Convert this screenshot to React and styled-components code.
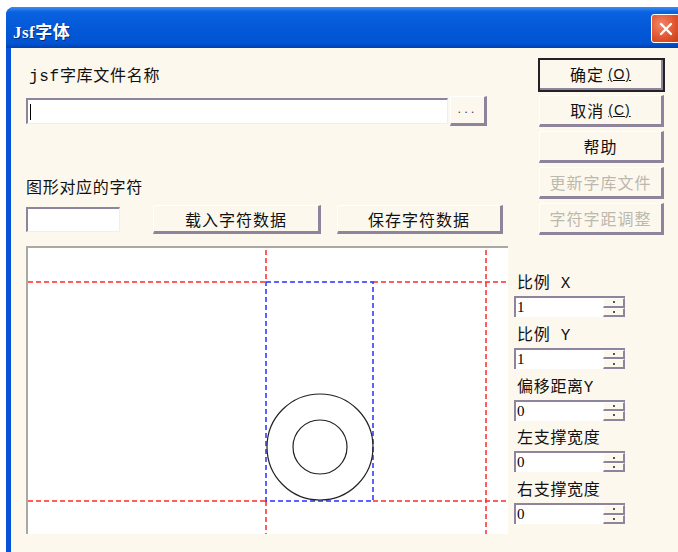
import React from "react";
import styled, { createGlobalStyle } from "styled-components";

const GlobalStyle = createGlobalStyle`
  html, body {
    margin: 0;
    padding: 0;
    background: #ffffff;
    overflow: hidden;
  }
  body {
    font-family: "Noto Sans CJK SC", sans-serif;
  }
`;

const FACE = "#fcf8ee";
const SHADOW = "#8e849b";

const Window = styled.div`
  margin: 7px 0 0 6px;
  width: 680px;
  height: 560px;
  display: flex;
  flex-direction: column;
  background: #0553d6;
  border-radius: 8px 8px 0 0;
`;

const TitleBar = styled.div`
  height: 41px;
  display: flex;
  align-items: center;
  justify-content: space-between;
  padding: 0 6px 0 7px;
  border-radius: 8px 8px 0 0;
  background: linear-gradient(
    to bottom,
    #3d8ff6 0%,
    #0a62e0 12%,
    #0459d8 50%,
    #0054d2 88%,
    #003fb0 100%
  );
`;

const Title = styled.div`
  padding-top: 6px;
  color: #ffffff;
  font-family: "Liberation Serif", "Noto Sans CJK SC", serif;
  font-weight: bold;
  font-size: 17px;
  letter-spacing: 0.5px;
  text-shadow: 1px 1px 0 #0a2a7a;
`;

const CloseButton = styled.div`
  width: 27px;
  height: 27px;
  margin-top: 2px;
  display: flex;
  align-items: center;
  justify-content: center;
  border: 1px solid #ffffff;
  border-radius: 3px;
  background: radial-gradient(circle at 35% 35%, #f0876a 0%, #e0552f 55%, #c23c14 100%);
`;

const Client = styled.div`
  flex: 1;
  margin-left: 5px;
  display: flex;
  background: ${FACE};
`;

const LeftPane = styled.div`
  width: 497px;
  box-sizing: border-box;
  padding: 19px 0 0 15px;
  display: flex;
  flex-direction: column;
`;

const Label = styled.div`
  height: ${(p) => p.$h || 20}px;
  line-height: ${(p) => p.$h || 20}px;
  margin-top: ${(p) => p.$mt || 0}px;
  padding-left: ${(p) => p.$pl || 0}px;
  font-family: "Liberation Mono", "Noto Sans CJK SC", monospace;
  font-size: 16px;
  letter-spacing: 0.7px;
  color: #111111;
  white-space: nowrap;
`;

const Row = styled.div`
  display: flex;
  align-items: center;
  margin-top: ${(p) => p.$mt || 0}px;
  gap: ${(p) => p.$gap || 0}px;
`;

const TextField = styled.div`
  box-sizing: border-box;
  width: ${(p) => p.$w}px;
  height: ${(p) => p.$h}px;
  margin-right: ${(p) => p.$mr || 0}px;
  display: flex;
  align-items: center;
  padding-left: 2px;
  background: #ffffff;
  border-top: 2px solid ${SHADOW};
  border-left: 2px solid ${SHADOW};
  border-bottom: 1px solid #f4efe4;
  border-right: 1px solid #f4efe4;
  font-family: "Liberation Serif", serif;
  font-size: 15px;
  color: #000000;
`;

const Caret = styled.span`
  width: 1px;
  height: 16px;
  background: #000000;
`;

const Button = styled.div`
  box-sizing: border-box;
  width: ${(p) => p.$w}px;
  height: ${(p) => p.$h || 32}px;
  display: flex;
  align-items: center;
  justify-content: center;
  background: ${FACE};
  border-top: 1px solid #ffffff;
  border-left: 1px solid #ffffff;
  border-right: 3px solid ${SHADOW};
  border-bottom: 3px solid ${SHADOW};
  outline: ${(p) => (p.$default ? "2px solid #222222" : "none")};
  outline-offset: -1px;
  font-family: "Noto Sans CJK SC", sans-serif;
  font-size: 16px;
  letter-spacing: 1px;
  color: ${(p) => (p.$disabled ? "#bdb8ad" : "#111111")};
  white-space: nowrap;
`;

const Dots = styled.span`
  font-family: "Liberation Sans", sans-serif;
  font-size: 13px;
  letter-spacing: 3px;
  color: #444444;
  padding-bottom: 4px;
`;

const Underline = styled.span`
  text-decoration: underline;
  font-family: "Liberation Sans", sans-serif;
  font-size: 14px;
  margin-left: 4px;
`;

const Canvas = styled.div`
  margin-top: 12px;
  width: 482px;
  height: 288px;
  box-sizing: border-box;
  background: #ffffff;
  border-top: 2px solid #a9a8a3;
  border-left: 2px solid #a9a8a3;
  svg {
    display: block;
  }
`;

const RightPane = styled.div`
  flex: 1;
  padding: 11px 0 0 6px;
  display: flex;
  flex-direction: column;
`;

const ButtonStack = styled.div`
  margin-left: 25px;
  display: flex;
  flex-direction: column;
  gap: 4px;
`;

const SpinColumn = styled.div`
  margin-top: 40px;
  display: flex;
  flex-direction: column;
  gap: 9.75px;
`;

const SpinGroup = styled.div`
  display: flex;
  flex-direction: column;
  gap: 2px;
`;

const SpinBox = styled.div`
  box-sizing: border-box;
  width: 111px;
  height: 21px;
  display: flex;
  background: #ffffff;
  border-top: 2px solid ${SHADOW};
  border-left: 2px solid ${SHADOW};
`;

const SpinValue = styled.div`
  flex: 1;
  padding-left: 1px;
  line-height: 18px;
  font-family: "Liberation Serif", serif;
  font-size: 15px;
  color: #000000;
`;

const SpinArrows = styled.div`
  width: 22px;
  display: flex;
  flex-direction: column;
`;

const SpinHalf = styled.div`
  flex: 1;
  display: flex;
  align-items: center;
  justify-content: center;
  background: ${FACE};
  border-top: 1px solid #ffffff;
  border-left: 1px solid #ffffff;
  border-right: 2px solid ${SHADOW};
  border-bottom: 2px solid ${SHADOW};
  &::after {
    content: "";
    width: 2px;
    height: 2px;
    background: #555555;
  }
`;

const spins = [
  { label: "比例 X", value: "1" },
  { label: "比例 Y", value: "1" },
  { label: "偏移距离Y", value: "0" },
  { label: "左支撑宽度", value: "0" },
  { label: "右支撑宽度", value: "0" },
];

const RED = "#ff2a2a";
const BLUE = "#2d2dff";

function Drawing() {
  const dash = "5 3";
  return (
    <svg width="480" height="286" viewBox="0 0 480 286">
      <g stroke={RED} strokeWidth="1.5" strokeDasharray={dash} fill="none">
        <line x1="0" y1="34" x2="238" y2="34" />
        <line x1="345" y1="34" x2="480" y2="34" />
        <line x1="0" y1="253" x2="238" y2="253" />
        <line x1="345" y1="253" x2="480" y2="253" />
        <line x1="238" y1="2" x2="238" y2="34" />
        <line x1="238" y1="253" x2="238" y2="286" />
        <line x1="458" y1="2" x2="458" y2="286" />
      </g>
      <rect
        x="238"
        y="34"
        width="107"
        height="219"
        stroke={BLUE}
        strokeWidth="1.5"
        strokeDasharray={dash}
        fill="none"
      />
      <g stroke="#222222" strokeWidth="1.2" fill="none">
        <circle cx="292" cy="199" r="53" />
        <circle cx="292" cy="199" r="27" />
      </g>
    </svg>
  );
}

export default function App() {
  return (
    <>
      <GlobalStyle />
      <Window>
        <TitleBar>
          <Title>Jsf字体</Title>
          <CloseButton>
            <svg width="16" height="16" viewBox="0 0 16 16">
              <path d="M3 3 L13 13 M13 3 L3 13" stroke="#ffffff" strokeWidth="2.4" strokeLinecap="round" />
            </svg>
          </CloseButton>
        </TitleBar>
        <Client>
          <LeftPane>
            <Label $pl={3}>jsf字库文件名称</Label>
            <Row $mt={9} $gap={2}>
              <TextField $w={422} $h={26}>
                <Caret />
              </TextField>
              <Button $w={37} $h={30}>
                <Dots>...</Dots>
              </Button>
            </Row>
            <Label $mt={53}>图形对应的字符</Label>
            <Row $mt={6} $gap={16}>
              <TextField $w={94} $h={25} $mr={17} />
              <Button $w={168} $h={29}>载入字符数据</Button>
              <Button $w={166} $h={29}>保存字符数据</Button>
            </Row>
            <Canvas>
              <Drawing />
            </Canvas>
          </LeftPane>
          <RightPane>
            <ButtonStack>
              <Button $w={125} $default>
                确定<Underline>(O)</Underline>
              </Button>
              <Button $w={125}>
                取消<Underline>(C)</Underline>
              </Button>
              <Button $w={125}>帮助</Button>
              <Button $w={125} $disabled>更新字库文件</Button>
              <Button $w={125} $disabled>字符字距调整</Button>
            </ButtonStack>
            <SpinColumn>
              {spins.map((s) => (
                <SpinGroup key={s.label}>
                  <Label $h={19} $pl={3}>{s.label}</Label>
                  <SpinBox>
                    <SpinValue>{s.value}</SpinValue>
                    <SpinArrows>
                      <SpinHalf />
                      <SpinHalf />
                    </SpinArrows>
                  </SpinBox>
                </SpinGroup>
              ))}
            </SpinColumn>
          </RightPane>
        </Client>
      </Window>
    </>
  );
}
